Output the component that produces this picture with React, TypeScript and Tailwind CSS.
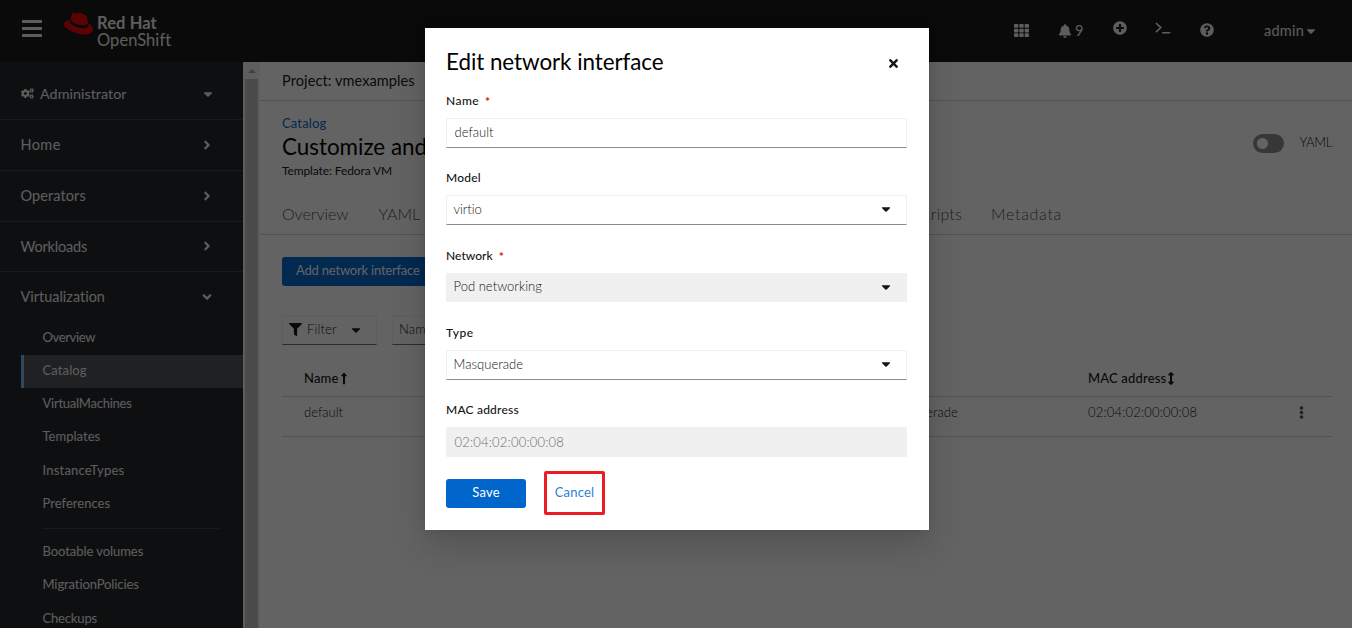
import type { ReactNode } from "react";
import {
  FaAngleDown,
  FaAngleRight,
  FaArrowsAltV,
  FaBell,
  FaCaretDown,
  FaCogs,
  FaEllipsisV,
  FaFilter,
  FaLongArrowAltUp,
  FaPlusCircle,
  FaQuestionCircle,
  FaRedhat,
  FaTh,
  FaTimes,
} from "react-icons/fa";

type Item = { label: string; tracking: string; box?: string };

const sections: Item[] = [
  { label: "Home", tracking: "tracking-[0.4px]", box: "h-[51px]" },
  { label: "Operators", tracking: "tracking-[0.1px]", box: "h-[51px]" },
  { label: "Workloads", tracking: "tracking-[-0.2px]", box: "h-[50px]" },
];

const virtualization: Item[] = [
  { label: "Overview", tracking: "tracking-[-0.35px]" },
  { label: "Catalog", tracking: "tracking-[0.12px]" },
  { label: "VirtualMachines", tracking: "tracking-[-0.24px]" },
  { label: "Templates", tracking: "tracking-[0.02px]" },
  { label: "InstanceTypes", tracking: "tracking-[0.2px]" },
  { label: "Preferences", tracking: "tracking-[0.03px]" },
];

const extras: Item[] = [
  { label: "Bootable volumes", tracking: "tracking-[-0.06px]" },
  { label: "MigrationPolicies", tracking: "tracking-[-0.1px]" },
  { label: "Checkups", tracking: "tracking-[-0.16px]" },
];

function MenuIcon() {
  return (
    <svg width="20" height="17" viewBox="0 0 20 17" fill="currentColor">
      <rect width="20" height="3" rx="0.7" />
      <rect y="7" width="20" height="3" rx="0.7" />
      <rect y="14" width="20" height="3" rx="0.7" />
    </svg>
  );
}

function TerminalIcon() {
  return (
    <svg width="16" height="13" viewBox="0 0 16 13" fill="none" stroke="currentColor" strokeWidth="1.6">
      <path d="M1 1l4.8 4.6L1 10.2" />
      <path d="M7.7 10.7h7" strokeLinecap="round" />
    </svg>
  );
}

function Masthead() {
  return (
    <header className="flex h-[62px] shrink-0 bg-[#151515] text-[#f0f0f0]">
      <div className="ml-[22px] mt-5 w-[20px]">
        <MenuIcon />
      </div>
      <FaRedhat className="ml-[22px] mt-[9px] h-[29px] w-[29px] text-[#e00]" />
      <div className="ml-1 mt-[15px] flex flex-col leading-[17px]">
        <span className="text-[16.5px] font-bold tracking-[0.1px]">Red Hat</span>
        <span className="text-[16.5px] tracking-[0.05px]">OpenShift</span>
      </div>
      <div className="ml-auto flex h-[61px] items-center">
        <FaTh className="mr-[29px] h-[15px] w-[15px]" />
        <FaBell className="h-[14px] w-[14px]" />
        <span className="ml-[3px] w-[38px] text-[14.5px]">9</span>
        <FaPlusCircle className="mb-[5px] h-[14px] w-[14px]" />
        <span className="mb-1 ml-7">
          <TerminalIcon />
        </span>
        <FaQuestionCircle className="ml-[29px] mb-px h-[14px] w-[14px]" />
        <span className="ml-[50px] text-[14.5px] tracking-[0.25px]">admin</span>
        <FaCaretDown className="ml-[2px] mr-[36px] h-[14px] w-[10px]" />
      </div>
    </header>
  );
}

function SubItem({ item, active, lift }: { item: Item; active?: boolean; lift?: boolean }) {
  return (
    <li
      className={`ml-[21px] flex h-[33.2px] items-center border-l-[3px] pl-[18.5px] text-[13px] ${
        active ? "border-[#73bcf7] bg-[#4f5255]" : "border-transparent"
      } ${lift ? "pb-[2px]" : "pb-[0.5px]"}`}
    >
      <span className={item.tracking}>{item.label}</span>
    </li>
  );
}

function Sidebar() {
  return (
    <nav className="w-[243px] shrink-0 overflow-hidden bg-[#212427] text-[#f0f0f0]">
      <div className="flex h-[58px] items-center border-b border-[#3c3f42] pl-[21px] pt-[6px] text-[14.3px]">
        <FaCogs className="mr-[6px] h-[13px] w-[13px]" />
        <span className="tracking-[0.05px]">Administrator</span>
        <FaCaretDown className="ml-auto mr-[30px] h-[14px] w-[10px]" />
      </div>
      {sections.map((s) => (
        <div key={s.label} className={`flex items-center border-b border-[#3c3f42] pl-[20.5px] text-[14.5px] ${s.box}`}>
          <span className={s.tracking}>{s.label}</span>
          <FaAngleRight className="ml-auto mr-[29px] mb-px h-[14px] w-[14px]" />
        </div>
      ))}
      <div className="flex h-[50px] items-center pl-[20.5px] text-[14.4px]">
        <span className="pb-px tracking-[0.03px]">Virtualization</span>
        <FaAngleDown className="ml-auto mr-[29px] mb-px h-[14px] w-[14px]" />
      </div>
      <ul>
        {virtualization.map((i) => (
          <SubItem key={i.label} item={i} active={i.label === "Catalog"} lift />
        ))}
      </ul>
      <div className="mb-[6.5px] ml-[42px] mr-[23px] mt-[7px] h-px bg-[#3c3f42]" />
      <ul>
        {extras.map((i) => (
          <SubItem key={i.label} item={i} />
        ))}
      </ul>
    </nav>
  );
}

function Scrollbar() {
  return (
    <div className="flex w-[17px] shrink-0 flex-col items-center bg-[#f1f1f1]">
      <div className="flex h-[17px] items-center">
        <svg width="8" height="4" viewBox="0 0 8 4" fill="#a3a3a3">
          <path d="M4 0l4 4H0z" />
        </svg>
      </div>
      <div className="w-[13px] flex-1 bg-[#c1c1c1]" />
    </div>
  );
}

function Main() {
  return (
    <main className="flex min-w-0 flex-1 flex-col bg-white text-[#151515]">
      <div className="flex h-[39px] items-center border-b border-[#d2d2d2] pl-[22px] text-[14.5px] tracking-[0.1px]">
        Project: vmexamples
      </div>
      <div className="flex h-[95px] justify-between pl-[22px]">
        <div className="flex flex-col pt-[13px]">
          <a className="text-[13px] leading-[18px] tracking-[0.14px] text-[#06c]">Catalog</a>
          <h1 className="text-[22.4px] leading-[29px] tracking-[0px] text-black">Customize and</h1>
          <span className="text-[12px] leading-[19px] tracking-[-0.11px]">Template: Fedora VM</span>
        </div>
        <div className="mr-5 flex h-[85px] items-center text-[13px] font-light">
          <span className="flex h-[19px] w-[31px] items-center rounded-full bg-[#8a8d90] pl-1">
            <span className="h-[11px] w-[11px] rounded-full bg-white" />
          </span>
          <span className="ml-[15px] pb-[2px] tracking-[-0.3px]">YAML</span>
        </div>
      </div>
      <div className="flex h-[39px] items-center justify-between border-b border-[#d2d2d2] pb-[2px] pl-[22px] text-[16px] font-light text-[#4f5255]">
        <div className="flex">
          <span className="mr-[30px]">Overview</span>
          <span>YAML</span>
        </div>
        <div className="mr-[290px] flex">
          <span className="mr-[29px] tracking-[0.2px]">Scripts</span>
          <span className="tracking-[0.68px]">Metadata</span>
        </div>
      </div>
      <div className="flex flex-col pl-[22px] pr-5">
        <button className="mt-[22px] flex h-[29px] w-[152px] items-center rounded-[3px] bg-[#06c] pb-[2px] pl-[14px] text-[13px] tracking-[-0.2px] whitespace-nowrap text-white">
          Add network interface
        </button>
        <div className="mt-[29px] flex gap-[15px] text-[13px] font-light">
          <div className="flex h-[30px] w-[95px] items-center border border-[#f0f0f0] border-b-[#6a6e73] pl-[6px]">
            <FaFilter className="mb-[2px] mr-[5px] h-[13px] w-[13px]" />
            <span className="tracking-[0.15px]">Filter</span>
            <FaCaretDown className="ml-[14px] h-[14px] w-[10px]" />
          </div>
          <div className="flex h-[30px] w-[95px] items-center border border-[#f0f0f0] border-b-[#6a6e73] pl-[6px]">
            <span className="tracking-[0.17px]">Name</span>
          </div>
        </div>
        <div className="mt-[14px] grid h-[38px] grid-cols-[584px_200px_1fr] items-center border-b border-[#d2d2d2] pl-[22px] pt-[2px] text-[13px] font-medium">
          <span className="flex items-center tracking-[0.17px]">
            Name
            <FaLongArrowAltUp className="h-[13px] w-[10px]" />
          </span>
          <span />
          <span className="flex items-center tracking-[0.17px]">
            MAC address
            <FaArrowsAltV className="h-[13px] w-[10px]" />
          </span>
        </div>
        <div className="grid h-10 grid-cols-[584px_200px_1fr] items-center border-b border-[#d2d2d2] pl-[22px] pb-[8px] text-[13px] font-light">
          <span>default</span>
          <span className="tracking-[0.07px]">Masquerade</span>
          <span className="flex items-center justify-between">
            <span className="tracking-[0.18px]">02:04:02:00:00:08</span>
            <FaEllipsisV className="mr-[24px] h-[13px] w-[13px] text-[#4f5255]" />
          </span>
        </div>
      </div>
    </main>
  );
}

function Label({ children, required, tracking }: { children: ReactNode; required?: boolean; tracking: string }) {
  return (
    <div className="flex h-[18px] items-center text-[12px] font-medium">
      <span className={tracking}>{children}</span>
      {required && <span className="ml-[6px] pt-[2px] text-[12px] font-bold text-[#c9190b]">*</span>}
    </div>
  );
}

function Field({
  label,
  labelTracking,
  value,
  tracking,
  required,
  select,
  disabled,
  box,
}: {
  label: string;
  labelTracking: string;
  value: string;
  tracking: string;
  required?: boolean;
  select?: boolean;
  disabled?: boolean;
  box: string;
}) {
  return (
    <div className={`flex flex-col ${box}`}>
      <Label required={required} tracking={labelTracking}>
        {label}
      </Label>
      <div
        className={`mt-2 flex items-center border text-[13px] font-light ${
          select ? "pb-[1.5px] pl-[6.5px]" : disabled ? "pl-[7.5px] pt-px" : "pb-[1px] pl-[7.5px]"
        } ${select && disabled ? "h-[29px]" : "h-[30px]"} ${
          disabled ? "border-[#f0f0f0] bg-[#f0f0f0]" : "border-[#f0f0f0] border-b-[#8a8d90] bg-white"
        } ${disabled && !select ? "text-[#6a6e73]" : "text-[#151515]"}`}
      >
        <span className={tracking}>{value}</span>
        {select && <FaCaretDown className="ml-auto mr-[15px] h-[14px] w-[10px]" />}
      </div>
    </div>
  );
}

function Modal() {
  return (
    <section className="mt-7 flex h-[502px] w-[504px] flex-col bg-white pl-[21px] pr-[22px] text-[#151515] shadow-[0_16px_32px_0_rgba(3,3,3,0.16),0_0_8px_0_rgba(3,3,3,0.1)]">
      <div className="flex h-[64px] items-center pt-[5px]">
        <h2 className="pb-[2px] text-[22.4px] tracking-[-0.05px] text-black">Edit network interface</h2>
        <FaTimes className="ml-auto mr-[7px] mt-px h-[13px] w-[13px]" />
      </div>
      <Field label="Name" labelTracking="tracking-[0.45px]" value="default" tracking="tracking-[0px]" required box="h-[77px]" />
      <Field label="Model" labelTracking="tracking-[0.2px]" value="virtio" tracking="tracking-[-0.06px]" select box="h-[78px]" />
      <Field label="Network" labelTracking="tracking-[0.04px]" value="Pod networking" tracking="tracking-[0.03px]" required select disabled box="h-[77px]" />
      <Field label="Type" labelTracking="tracking-[0.6px]" value="Masquerade" tracking="tracking-[0.05px]" select box="h-[77px]" />
      <Field label="MAC address" labelTracking="tracking-[0.2px]" value="02:04:02:00:00:08" tracking="tracking-[0.2px]" disabled box="h-[70px]" />
      <div className="flex items-center text-[13px]">
        <button className="h-[29px] w-20 rounded-[3px] bg-[#06c] pb-[2px] tracking-[0.23px] text-white">Save</button>
        <button className="mb-px ml-[18px] h-[44px] w-[61px] rounded-[2px] border-[3px] border-[#ec1c24] pb-px tracking-[0.2px] text-[#2a7fd6]">
          Cancel
        </button>
      </div>
    </section>
  );
}

export default function App() {
  return (
    <div className="relative flex h-[628px] w-[1352px] flex-col overflow-hidden font-['Lato',sans-serif]">
      <Masthead />
      <div className="flex min-h-0 flex-1">
        <Sidebar />
        <Scrollbar />
        <Main />
      </div>
      <div className="absolute inset-0 flex items-start justify-center bg-[rgba(3,3,3,0.62)] pl-[2px]">
        <Modal />
      </div>
    </div>
  );
}
